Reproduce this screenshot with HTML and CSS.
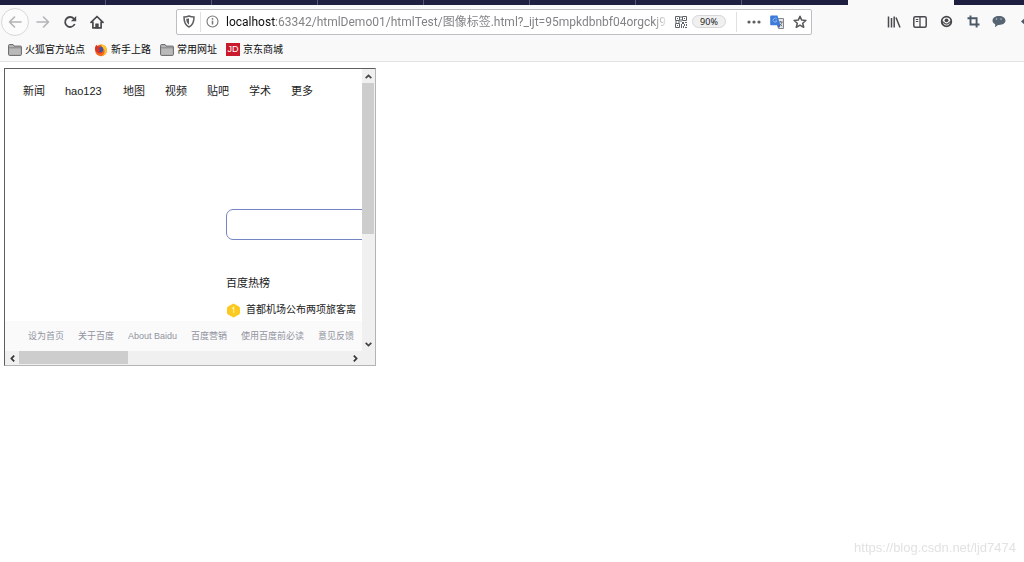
FILE: index.html
```html
<!DOCTYPE html>
<html lang="zh-CN">
<head>
<meta charset="utf-8">
<title>图像标签.html</title>
<link rel="stylesheet" href="styles.css">
</head>
<body>
<div class="tabs">
  <div class="tab tab-first"></div><div class="tab"></div><div class="tab"></div><div class="tab"></div>
  <div class="tab"></div><div class="tab"></div><div class="tab"></div><div class="tab"></div>
  <div class="tab tab-active"></div>
</div>
<header class="chrome">
  <div class="toolbar">
    <nav class="history">
      <button class="icon-btn back" aria-label="后退"><svg width="14" height="14" viewBox="0 0 14 14" fill="none" stroke="#b4b4b6" stroke-width="1.6" stroke-linecap="round" stroke-linejoin="round"><path d="M13 7H1.5M6.5 2l-5 5 5 5"/></svg></button>
      <button class="icon-btn" aria-label="前进"><svg width="14" height="14" viewBox="0 0 14 14" fill="none" stroke="#b4b4b6" stroke-width="1.6" stroke-linecap="round" stroke-linejoin="round"><path d="M1 7h11.5M7.500 2l5 5-5 5"/></svg></button>
      <button class="icon-btn" aria-label="刷新"><svg width="14" height="14" viewBox="0 0 14 14" fill="none" stroke="#4a4a4e" stroke-width="1.8"><path d="M11.700 9A5 5 0 1 1 10.800 3.600L12 4.800"/><path d="M13.200 1v5.300H7.900z" fill="#4a4a4e" stroke="none"/></svg></button>
      <button class="icon-btn" aria-label="主页"><svg width="14" height="14" viewBox="0 0 14 14" fill="none" stroke="#4a4a4e" stroke-width="1.700" stroke-linejoin="round" stroke-linecap="round"><path d="M1 7.300L7 1.500l6 5.800M2.900 7v5.900h8.200V7"/><path d="M5.600 13V8.800h2.800V13z" fill="#4a4a4e" stroke-width=".6"/></svg></button>
    </nav>
    <div class="urlbar">
      <button class="url-btn" aria-label="跟踪保护"><svg width="12" height="13" viewBox="0 0 12 13"><path d="M6 1c1.800.8 3.300 1 5 1 0 5-.8 8-5 10C1.800 10 1 7 1 2c1.700 0 3.200-.2 5-1z" fill="none" stroke="#5f5f62" stroke-width="1.500"/><path d="M6 3.200v6.500C4 8.500 3.300 6.600 3.200 3.800 4.200 3.800 5 3.600 6 3.200z" fill="#5f5f62"/></svg></button>
      <span class="rule"></span>
      <button class="url-btn" aria-label="网站信息"><svg width="13" height="13" viewBox="0 0 13 13"><circle cx="6.500" cy="6.500" r="5.500" fill="none" stroke="#77777a" stroke-width="1.100"/><path d="M6.500 5.700v3.800" stroke="#77777a" stroke-width="1.500"/><circle cx="6.500" cy="3.900" r=".9" fill="#77777a"/></svg></button>
      <div class="address"><span class="host">localhost</span>:63342/htmlDemo01/htmlTest/图像标签.html?_ijt=95mpkdbnbf04orgckj9</div>
      <button class="url-btn" aria-label="二维码"><svg width="12" height="12" viewBox="0 0 12 12"><path d="M.5.500h4v4h-4zM7.500.500h4v4h-4zM.5 7.500h4v4h-4z" fill="none" stroke="#5d6268"/><path d="M2 2h1v1H2zM9 2h1v1H9zM2 9h1v1H2zM5.500 0h1v2h-1zM5.500 3h1v3h-1zM0 5.500h2v1H0zM3 5.500h2v1H3zM7 6h2v2H7zM10 6h2v1h-2zM9 8h1v2H9zM6 8h1v4H6zM11 8h1v2h-1zM8 10h1v2H8zM10 11h2v1h-2z" fill="#5d6268"/></svg></button>
      <button class="zoom">90%</button>
      <span class="rule rule-wide"></span>
      <button class="url-btn" aria-label="页面操作"><svg width="14" height="4" viewBox="0 0 14 4" fill="#5f5f62"><circle cx="2" cy="2" r="1.600"/><circle cx="7" cy="2" r="1.600"/><circle cx="12" cy="2" r="1.600"/></svg></button>
      <button class="url-btn" aria-label="翻译"><svg width="14" height="14" viewBox="0 0 14 14"><path d="M5.500 3.500h8v10h-5z" fill="#e4e5e8" stroke="#84878c"/><path d="M8.500 7h4.200M10.600 6v1M12 7c-.5 2-1.500 3-3 4M9.300 8.500l2.900 2.700" stroke="#6b7078" fill="none"/><path d="M1 .5h6.500l2.800 9.800H1a.8.800 0 0 1-.8-.8V1.300A.8.800 0 0 1 1 .5z" fill="#3d7bdb"/><path d="M6.800 4a2 2 0 1 0 .2 2H5.200" fill="none" stroke="#8fb3ec"/><path d="M7.500 10.300h2.800L9 13z" fill="#2c56a8"/></svg></button>
      <button class="url-btn" aria-label="收藏"><svg width="14" height="14" viewBox="0 0 14 14"><path d="M7 1.300l1.700 3.800 4.200.4-3.200 2.700 1 4.100L7 10.200l-3.700 2.100 1-4.100L1.100 5.500l4.200-.4z" fill="none" stroke="#58585b" stroke-width="1.500" stroke-linejoin="round"/></svg></button>
    </div>
    <div class="tools">
      <button class="tool" aria-label="书库"><svg width="14" height="14" viewBox="0 0 14 14" stroke="#4a4a4e" stroke-width="1.500" fill="none"><path d="M1.500 1.500v11M4.500 3v9.500M7.200 1.500v11M9 2.500l4 10"/></svg></button>
      <button class="tool" aria-label="侧栏"><svg width="14" height="12" viewBox="0 0 14 12" stroke="#4a4a4e" fill="none"><rect x=".8" y=".8" width="12.400" height="10.400" rx="1.500" stroke-width="1.500"/><path d="M7 1v10" stroke-width="1.300"/><path d="M2.800 3.500h2.500M2.800 5.500h2.500"/></svg></button>
      <button class="tool" aria-label="账户"><svg width="13" height="13" viewBox="0 0 13 13"><path fill-rule="evenodd" d="M6.500.8a5.700 5.700 0 1 0 0 11.400 5.700 5.700 0 0 0 0-11.400zM3.300 7.300a3.300 3.300 0 0 0 6.400 0c.3 2-1.200 3.200-3.200 3.200S3 9.300 3.300 7.300z" fill="#4a4a4e"/><path d="M2.600 5.800C2.700 3.600 4.300 2.400 6.500 2.400s3.800 1.200 3.900 3.400c-.4.900-1 .9-1.500.9a2.500 2.500 0 0 1-4.800 0c-.6 0-1.100 0-1.500-.9z" fill="#f9f9fa"/><circle cx="6.500" cy="5.300" r="1.900" fill="#4a4a4e"/></svg></button>
      <button class="tool" aria-label="截图"><svg width="13" height="13" viewBox="0 0 13 13" stroke="#4b5866" stroke-width="1.900" fill="none"><path d="M3.500 0.500v9H12.500M0.500 3.300h9.100V12.500"/></svg></button>
      <button class="tool" aria-label="消息"><svg width="14" height="13" viewBox="0 0 14 13"><path d="M7 1c3.800 0 6.500 1.900 6.500 4.600S10.800 10 7 10l-1 0L3 12.300l.3-2.900C1.500 8.600.5 7.200.5 5.600.500 2.900 3.200 1 7 1z" fill="#566473"/><circle cx="4.500" cy="4" r=".8" fill="#b9c2cb"/><circle cx="9" cy="4" r=".8" fill="#b9c2cb"/></svg></button>
      <button class="tool" aria-label="撤销"><svg width="12" height="12" viewBox="0 0 12 12"><path d="M1 5.500L6 1v3h5v3H6v3z" fill="#4b5866"/></svg></button>
    </div>
  </div>
  <nav class="bookmarks">
    <a class="bookmark" href="#"><svg width="14" height="12" viewBox="0 0 14 12"><path d="M.6 10.500V1.500q0-.9.900-.9h3.600l1 1.500h6.400q.9 0 .9.900v7.500q0 .9-.9.900h-11q-.9 0-.9-.9z" fill="#b9b9b9" stroke="#66666a"/><path d="M1 3.800h12" stroke="#77777a" stroke-width=".8"/></svg>火狐官方站点</a>
    <a class="bookmark" href="#"><svg width="14" height="14" viewBox="0 0 14 14"><circle cx="7" cy="7.300" r="5.900" fill="#f26a21"/><path d="M7 1.200c4 .2 6.200 3.200 5.900 6.600C12.700 10.500 10 13 7.500 13.200c3-1.700 4-5 2.300-7.200C8.600 4.600 7.300 3.800 7 1.200z" fill="#ffc42e"/><circle cx="6.300" cy="6.500" r="2.900" fill="#3b55a3"/><path d="M1 4.500L2.200 1.800 4 3.500l2.600.5-1.800 1.700 1.500 1.500-1.300 1.300c1 1.200 3 .8 4-.2-.5 2.200-4.500 3-6.500.7C1.200 7.500.8 6 1 4.500z" fill="#dc3327"/></svg>新手上路</a>
    <a class="bookmark" href="#"><svg width="14" height="12" viewBox="0 0 14 12"><path d="M.6 10.500V1.500q0-.9.900-.9h3.600l1 1.500h6.400q.9 0 .9.900v7.500q0 .9-.9.900h-11q-.9 0-.9-.9z" fill="#b9b9b9" stroke="#66666a"/><path d="M1 3.800h12" stroke="#77777a" stroke-width=".8"/></svg>常用网址</a>
    <a class="bookmark" href="#"><span class="jd">JD</span>京东商城</a>
  </nav>
</header>
<main class="page">
  <section class="frame">
    <div class="view">
      <div class="site">
        <nav class="site-nav">
          <a href="#">新闻</a><a class="latin" href="#">hao123</a><a href="#">地图</a><a href="#">视频</a><a href="#">贴吧</a><a href="#">学术</a><a href="#">更多</a>
        </nav>
        <div class="center">
          <input class="search" type="text" aria-label="搜索">
          <h2 class="hot-title">百度热榜</h2>
          <a class="hot" href="#"><svg width="15" height="15" viewBox="0 0 15 15"><path d="M7.500.5L13 3.500q1 .6 1 1.700v4.600q0 1.100-1 1.700l-5.500 3-5.500-3q-1-.6-1-1.700V5.200q0-1.100 1-1.700z" fill="#fbc91f"/><path d="M6 5.800l1.700-1.500v6" fill="none" stroke="#fff0a8" stroke-width="1.100"/></svg>首都机场公布两项旅客离</a>
        </div>
      </div>
      <footer class="site-foot">
        <a href="#">设为首页</a><a href="#">关于百度</a><a href="#">About Baidu</a><a href="#">百度营销</a><a href="#">使用百度前必读</a><a href="#">意见反馈</a>
      </footer>
    </div>
    <div class="vbar">
      <button class="arrow" aria-label="向上"><svg width="7" height="5" viewBox="0 0 7 5"><path d="M.7 4.200l2.800-2.800 2.800 2.800" fill="none" stroke="#444" stroke-width="1.700"/></svg></button>
      <div class="vthumb"></div>
      <button class="arrow" aria-label="向下"><svg width="7" height="5" viewBox="0 0 7 5"><path d="M.7.800l2.800 2.800L6.300.800" fill="none" stroke="#444" stroke-width="1.700"/></svg></button>
    </div>
    <div class="hbar">
      <button class="arrow" aria-label="向左"><svg width="5" height="7" viewBox="0 0 5 7"><path d="M4.200.7L1.400 3.500l2.800 2.800" fill="none" stroke="#333" stroke-width="1.700"/></svg></button>
      <div class="hthumb"></div>
      <button class="arrow" aria-label="向右"><svg width="5" height="7" viewBox="0 0 5 7"><path d="M.8.700l2.800 2.800L.8 6.300" fill="none" stroke="#333" stroke-width="1.700"/></svg></button>
    </div>
    <div class="corner"></div>
  </section>
</main>
<div class="watermark">https://blog.csdn.net/ljd7474</div>
</body>
</html>
```

FILE: styles.css
```css
* { box-sizing: border-box; }
body {
  margin: 0;
  background: #fff;
  color: #222;
  font-family: "Liberation Sans", "Noto Sans CJK SC", sans-serif;
  overflow: hidden;
}
button {
  display: flex;
  align-items: center;
  justify-content: center;
  flex: none;
  margin: 0;
  padding: 0;
  border: 0;
  background: none;
}
a { color: inherit; text-decoration: none; white-space: nowrap; }
svg { display: block; flex: none; }

.tabs { display: flex; height: 5px; background: #1f1f42; }
.tab { width: 106px; border-right: 1px solid #55556f; }
.tab:nth-child(8) { border-right: 0; }
.tab-active { border: 0; background: #f9f9fa; }

.chrome { background: #f9f9fa; border-bottom: 1px solid #e3e3e5; }
.toolbar { display: flex; align-items: center; height: 33px; overflow: hidden; }
.history { display: flex; align-items: center; width: 176px; padding-left: 1px; }
.icon-btn { width: 27px; height: 28px; }
.back { width: 28px; border: 1px solid #d8d8da; border-radius: 50%; background: #fcfcfc; }

.urlbar {
  display: flex;
  align-items: center;
  flex: 1;
  min-width: 0;
  height: 26px;
  border: 1px solid #bfbfc3;
  border-radius: 2px;
  background: #fff;
}
.url-btn { width: 23px; height: 22px; }
.rule { flex: none; width: 1px; height: 20px; background: #e0e0e2; }
.rule-wide { margin: 0 5px 0 10px; }
.address {
  flex: 1;
  min-width: 0;
  padding-left: 2px;
  overflow: hidden;
  white-space: nowrap;
  color: #838386;
  font: 12px/22px Roboto, "Noto Sans CJK SC", sans-serif;
  -webkit-mask-image: linear-gradient(to left, transparent, #000 16px);
  mask-image: linear-gradient(to left, transparent, #000 16px);
}
.host { color: #0c0c0d; }
.zoom {
  width: 34px;
  height: 13px;
  border: 1px solid #d6d6d9;
  border-radius: 7px;
  background: #f0f0f1;
  color: #222;
  font: 9px/11px "Noto Sans", sans-serif;
}

.tools {
  display: grid;
  grid-template-columns: repeat(6, 1fr);
  flex: none;
  width: 158px;
  margin: 0 -15px 0 69px;
}
.tool { height: 26px; }

.bookmarks { display: flex; align-items: center; gap: 9px; height: 23px; padding-left: 8px; }
.bookmark { display: flex; align-items: center; gap: 3px; color: #0c0c0d; font-size: 10px; line-height: 14px; }
.jd {
  width: 14px;
  background: #c8192d;
  color: #fff;
  font-size: 9px;
  line-height: 13px;
  text-align: center;
}

.page { padding: 6px 4px; }
.frame {
  display: grid;
  grid-template-columns: 1fr 13px;
  grid-template-rows: 1fr 14px;
  width: 372px;
  height: 298px;
  border: 1px solid #5e5e5e;
  border-right-color: #b4b4b4;
  border-bottom-color: #b4b4b4;
}
.view { display: flex; flex-direction: column; min-width: 0; overflow: hidden; }
.site { flex: 1; min-height: 0; overflow: hidden; }
.site-nav { display: flex; gap: 20px; padding: 14px 0 0 18px; font-size: 11px; line-height: 16px; }
.latin { min-width: 38px; }
.center { width: 600px; padding: 110px 0 0 221px; }
.search {
  display: block;
  width: 100%;
  height: 31px;
  border: 1px solid #7585c4;
  border-radius: 7px;
  background: #fff;
}
.hot-title { margin: 35px 0 0; font-size: 11px; font-weight: 400; line-height: 16px; }
.hot { display: flex; align-items: center; gap: 5px; margin-top: 11px; font-size: 10px; line-height: 16px; }
.site-foot {
  display: flex;
  gap: 14px;
  padding-left: 23px;
  background: #fafafb;
  color: #9193a0;
  font-size: 9px;
  line-height: 30px;
}

.vbar, .hbar { display: flex; background: #f0f0f0; }
.vbar { flex-direction: column; }
.arrow { width: 14px; height: 14px; }
.vbar .arrow { width: 12px; }
.vthumb, .hthumb { flex: none; background: #cdcdcd; }
.vthumb { height: 151px; margin: 0 1px auto 0; }
.hthumb { width: 109px; height: 13px; margin-right: auto; }
.corner { background: #f0f0f0; }

.watermark {
  position: fixed;
  right: 8px;
  bottom: 6px;
  color: #e2e2e2;
  font-size: 13px;
  line-height: 16px;
}
```
